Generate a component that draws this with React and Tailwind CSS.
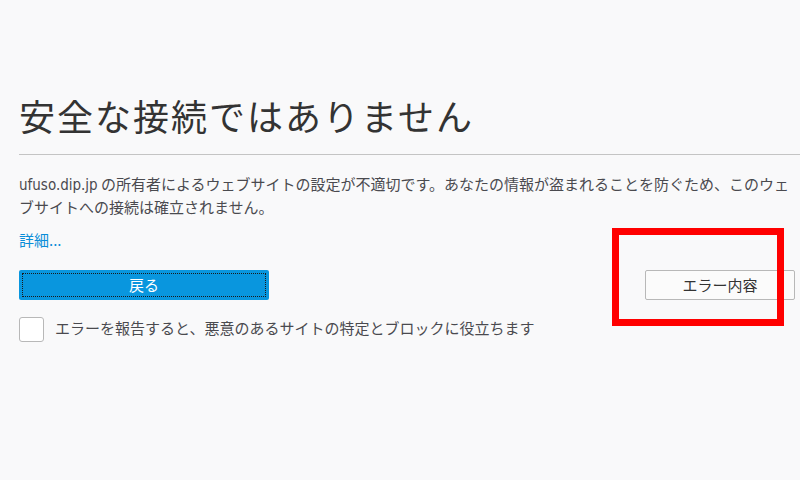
import React from "react";

export default function App() {
  const jp = { fontFamily: '"Noto Sans CJK JP", "Noto Sans", sans-serif' };
  return (
    <div
      className="relative w-[800px] h-[480px] overflow-hidden bg-[#f9f9fa] pl-[19px]"
      style={jp}
    >
      <h1 className="pt-[94px] text-[36px] leading-[42px] text-[#333333] font-normal tracking-[2px]">
        安全な接続ではありません
      </h1>
      <div className="mt-[18px] border-b border-[#c4c4c4]" />
      <p className="mt-[18px] text-[15px] leading-[21px] text-[#4a4a4f] pr-[10px]">
        <span style={{ fontFamily: '"Liberation Sans Narrow", "DejaVu Sans Condensed", "Noto Sans CJK JP", sans-serif' }}>
          ufuso.dip.jp
        </span>{" "}
        の所有者によるウェブサイトの設定が不適切です。あなたの情報が盗まれることを防ぐため、このウェ
        <br />
        ブサイトへの接続は確立されません。
      </p>
      <div className="mt-[12px] text-[15px] leading-[21px] text-[#0a8dd8]">詳細...</div>
      <div className="mt-[20px] flex items-center justify-between pr-[5px]">
        <button className="relative w-[250px] h-[30px] rounded-[2px] bg-[#0996de] text-white text-[15px] leading-[30px] text-center">
          <span className="absolute inset-[3px] border border-dotted border-[#1a1a1a]" />
          戻る
        </button>
        <button className="w-[150px] h-[30px] rounded-[2px] border border-[#b8b8b8] bg-[#fbfbfb] text-[#333333] text-[15px] leading-[28px] text-center">
          エラー内容
        </button>
      </div>
      <div className="mt-[17px] flex items-start gap-[11px]">
        <div className="w-[25px] h-[25px] rounded-[3px] border border-[#b8b8b8] bg-white" />
        <span className="text-[15px] leading-[21px] text-[#4a4a4f]">
          エラーを報告すると、悪意のあるサイトの特定とブロックに役立ちます
        </span>
      </div>
      <div className="absolute left-[612px] top-[228px] w-[172px] h-[98px] border-[7px] border-[#ff0000]" />
    </div>
  );
}
